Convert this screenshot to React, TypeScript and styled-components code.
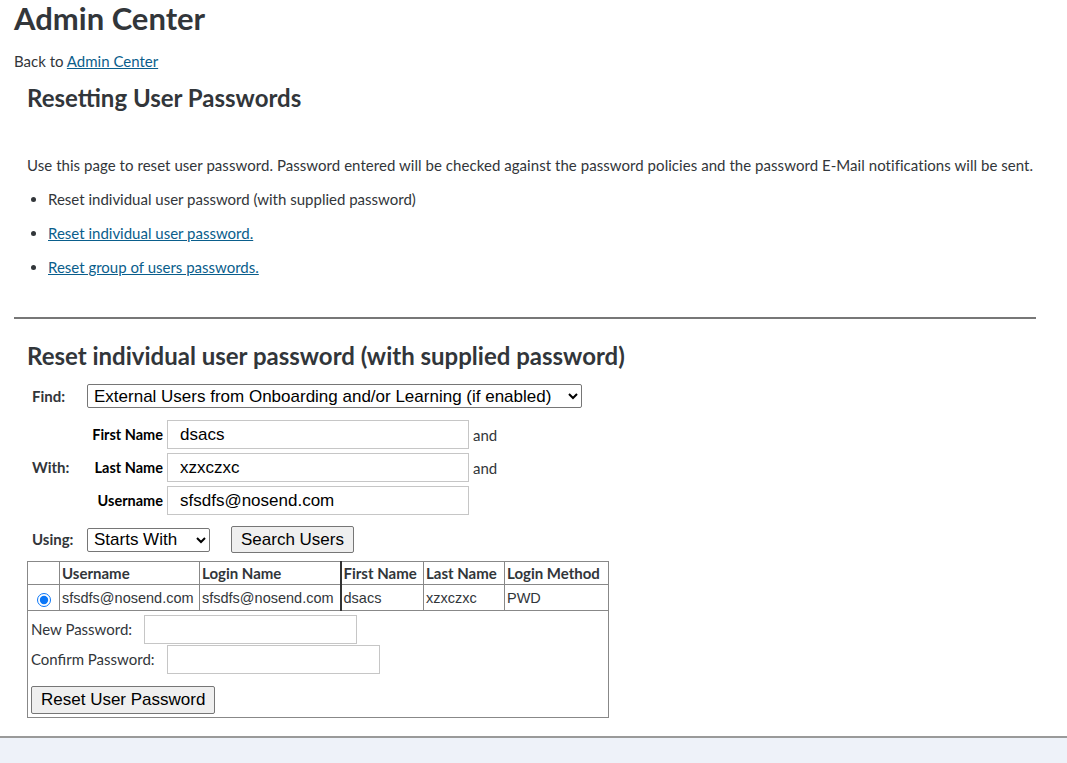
import React, { useState } from "react"
import styled, { createGlobalStyle } from "styled-components"

const GlobalStyle = createGlobalStyle`
  html, body {
    margin: 0;
    padding: 0;
    background-color: #eef2f9;
  }
  body {
    font-family: "Lato", "Noto Sans", sans-serif;
    color: #32363a;
  }
`

const Page = styled.div`
  background-color: #ffffff;
  border-bottom: 2px solid #9a9a9a;
  box-shadow: 0 1px 2px rgba(0, 0, 0, 0.15);
  padding: 0 31px 18px 14px;
  min-height: 736px;
  box-sizing: border-box;
`

const Title = styled.h1`
  font-size: 31px;
  font-weight: 700;
  margin: 0;
  line-height: 37px;
  color: #32363a;
`

const BackLine = styled.div`
  font-size: 15px;
  margin-top: 15px;
  line-height: 18px;
`

const Link = styled.a`
  color: #0a5e8c;
  text-decoration: underline;
  cursor: pointer;
`

const Section = styled.section`
  padding-left: 13px;
`

const SectionTitle = styled.h2<{ gap?: number }>`
  font-size: 24px;
  font-weight: 700;
  margin: ${(p) => p.gap ?? 0}px 0 0;
  line-height: 28px;
  color: #32363a;
`

const Intro = styled.p`
  font-size: 15px;
  margin: 44px 0 0;
  line-height: 18px;
  white-space: nowrap;
  letter-spacing: 0.05px;
`

const List = styled.ul`
  margin: 16px 0 0;
  padding-left: 21px;
  font-size: 15px;
  line-height: 18px;
`

const Item = styled.li`
  margin-bottom: 16px;
`

const Divider = styled.hr`
  border: none;
  border-top: 2px solid #777777;
  margin: 41px 0 23px;
`

const FindGrid = styled.div`
  display: grid;
  grid-template-columns: 55px auto;
  align-items: center;
  row-gap: 10px;
  margin-top: 14px;
  padding-left: 5px;
`

const RowLabel = styled.span`
  font-size: 15px;
  font-weight: 700;
`

const Select = styled.select<{ width: number }>`
  font-family: "Liberation Sans", Arial, sans-serif;
  font-size: 17px;
  color: #000000;
  height: 24px;
  width: ${(p) => p.width}px;
  border: 1px solid #767676;
  border-radius: 2px;
  background: #ffffff;
  padding: 0 2px;
  justify-self: start;
`

const NameGrid = styled.div`
  display: grid;
  grid-template-columns: 76px 302px auto;
  align-items: center;
  column-gap: 4px;
  row-gap: 4px;
  margin-top: 2px;
`

const NameLabel = styled.span`
  font-size: 14.5px;
  font-weight: 700;
  text-align: right;
  color: #000000;
  white-space: nowrap;
`

const TextInput = styled.input<{ width: number }>`
  font-family: "Liberation Sans", Arial, sans-serif;
  font-size: 17px;
  color: #000000;
  height: 29px;
  width: ${(p) => p.width}px;
  box-sizing: border-box;
  border: 1px solid #c6c6c6;
  padding: 0 12px;
  outline: none;
`

const AndText = styled.span`
  font-size: 15px;
  color: #32363a;
`

const UsingRow = styled.div`
  display: flex;
  align-items: center;
  gap: 21px;
  margin-top: 1px;
`

const Button = styled.button`
  font-family: "Liberation Sans", Arial, sans-serif;
  font-size: 17px;
  color: #000000;
  background-color: #efefef;
  border: 1px solid #767676;
  border-radius: 2px;
  padding: 0 9px;
  height: 27px;
`

const Results = styled.table`
  margin-top: 8px;
  border-collapse: collapse;
  border: 1px solid #888888;
  font-size: 15px;
`

const Th = styled.th<{ strong?: boolean; w?: number }>`
  border: 1px solid #888888;
  ${(p) => (p.strong ? "border-left: 2px solid #333333;" : "")}
  ${(p) => (p.w ? `width: ${p.w}px;` : "")}
  text-align: left;
  font-weight: 700;
  padding: 2px 2px;
  height: 18px;
  white-space: nowrap;
  box-sizing: border-box;
`

const Td = styled.td<{ strong?: boolean }>`
  border: 1px solid #888888;
  ${(p) => (p.strong ? "border-left: 2px solid #333333;" : "")}
  font-family: "Liberation Sans", Arial, sans-serif;
  font-size: 14.5px;
  padding: 3px 2px;
  height: 19px;
  white-space: nowrap;
`

const RadioCell = styled.td`
  border: 1px solid #888888;
  text-align: center;
  padding: 0;
`

const Radio = styled.input`
  accent-color: #0a76f7;
  margin: 0;
  width: 14px;
  height: 14px;
  vertical-align: middle;
`

const PasswordCell = styled.td`
  padding: 3px 3px 3px;
`

const PasswordRow = styled.div`
  display: flex;
  align-items: center;
  gap: 12px;
  font-size: 15px;
  height: 30px;
`

const ResetButton = styled(Button)`
  margin-top: 12px;
  height: 28px;
`

const App = (): JSX.Element => {
  const [first, setFirst] = useState("dsacs")
  const [last, setLast] = useState("xzxczxc")
  const [user, setUser] = useState("sfsdfs@nosend.com")

  return (
    <>
      <GlobalStyle />
      <Page>
        <Title>Admin Center</Title>
        <BackLine>
          Back to <Link>Admin Center</Link>
        </BackLine>
        <Section>
          <SectionTitle gap={14}>Resetting User Passwords</SectionTitle>
          <Intro>
            Use this page to reset user password. Password entered will be checked against the
            password policies and the password E-Mail notifications will be sent.
          </Intro>
          <List>
            <Item>Reset individual user password (with supplied password)</Item>
            <Item>
              <Link>Reset individual user password.</Link>
            </Item>
            <Item>
              <Link>Reset group of users passwords.</Link>
            </Item>
          </List>
        </Section>
        <Divider />
        <Section>
          <SectionTitle>Reset individual user password (with supplied password)</SectionTitle>
          <FindGrid>
            <RowLabel>Find:</RowLabel>
            <Select width={495} defaultValue="ext">
              <option value="ext">External Users from Onboarding and/or Learning (if enabled)</option>
              <option value="int">Internal Users</option>
            </Select>
            <RowLabel>With:</RowLabel>
            <NameGrid>
              <NameLabel>First Name</NameLabel>
              <TextInput width={302} value={first} onChange={(e) => setFirst(e.target.value)} />
              <AndText>and</AndText>
              <NameLabel>Last Name</NameLabel>
              <TextInput width={302} value={last} onChange={(e) => setLast(e.target.value)} />
              <AndText>and</AndText>
              <NameLabel>Username</NameLabel>
              <TextInput width={302} value={user} onChange={(e) => setUser(e.target.value)} />
              <span />
            </NameGrid>
            <RowLabel>Using:</RowLabel>
            <UsingRow>
              <Select width={123} defaultValue="starts">
                <option value="starts">Starts With</option>
                <option value="contains">Contains</option>
              </Select>
              <Button>Search Users</Button>
            </UsingRow>
          </FindGrid>
          <Results>
            <thead>
              <tr>
                <Th w={32} />
                <Th w={140}>Username</Th>
                <Th w={141}>Login Name</Th>
                <Th w={83} strong>First Name</Th>
                <Th w={81}>Last Name</Th>
                <Th w={104}>Login Method</Th>
              </tr>
            </thead>
            <tbody>
              <tr>
                <RadioCell>
                  <Radio type="radio" name="pick" defaultChecked />
                </RadioCell>
                <Td>sfsdfs@nosend.com</Td>
                <Td>sfsdfs@nosend.com</Td>
                <Td strong>dsacs</Td>
                <Td>xzxczxc</Td>
                <Td>PWD</Td>
              </tr>
              <tr>
                <PasswordCell colSpan={6}>
                  <PasswordRow>
                    New Password: <TextInput width={213} type="password" />
                  </PasswordRow>
                  <PasswordRow>
                    Confirm Password: <TextInput width={213} type="password" />
                  </PasswordRow>
                  <ResetButton>Reset User Password</ResetButton>
                </PasswordCell>
              </tr>
            </tbody>
          </Results>
        </Section>
      </Page>
    </>
  )
}

export default App
